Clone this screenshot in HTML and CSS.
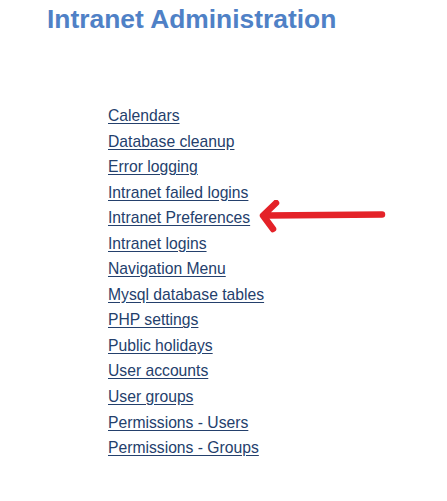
FILE: index.html
```html
<!DOCTYPE html>
<html>
<head>
<meta charset="utf-8">
<link rel="stylesheet" href="styles.css">
</head>
<body>
<div class="page">
  <h1 class="title">Intranet Administration</h1>
  <ul class="menu">
    <li><a href="#">Calendars</a></li>
    <li><a href="#">Database cleanup</a></li>
    <li><a href="#">Error logging</a></li>
    <li><a href="#">Intranet failed logins</a></li>
    <li class="marked"><a href="#">Intranet Preferences</a>
      <svg class="arrow" width="130" height="34" viewBox="0 0 130 34">
        <path d="M126 14.5 L11 15.5 M20 3 L7 15.5 L17 29" fill="none" stroke="#e42228" stroke-width="6.5" stroke-linecap="round" stroke-linejoin="round"/>
      </svg>
    </li>
    <li><a href="#">Intranet logins</a></li>
    <li><a href="#">Navigation Menu</a></li>
    <li><a href="#">Mysql database tables</a></li>
    <li><a href="#">PHP settings</a></li>
    <li><a href="#">Public holidays</a></li>
    <li><a href="#">User accounts</a></li>
    <li><a href="#">User groups</a></li>
    <li><a href="#">Permissions - Users</a></li>
    <li><a href="#">Permissions - Groups</a></li>
  </ul>
</div>
</body>
</html>
```

FILE: styles.css
```css
html, body {
  margin: 0;
  padding: 0;
  background: #ffffff;
}
.page {
  font-family: "Liberation Sans", Arial, sans-serif;
  padding: 4px 0 0 47px;
}
.title {
  margin: 0;
  font-size: 26.4px;
  line-height: 30px;
  font-weight: bold;
  color: #4f81c6;
}
.menu {
  list-style: none;
  margin: 69px 0 0 0;
  padding: 0 0 0 61px;
  font-size: 15.7px;
  line-height: 25.55px;
}
.menu li {
  position: relative;
}
.menu a {
  color: #24406c;
  text-decoration: underline;
  text-underline-offset: 2px;
}
.arrow {
  position: absolute;
  left: 148px;
  top: -5px;
}
```
